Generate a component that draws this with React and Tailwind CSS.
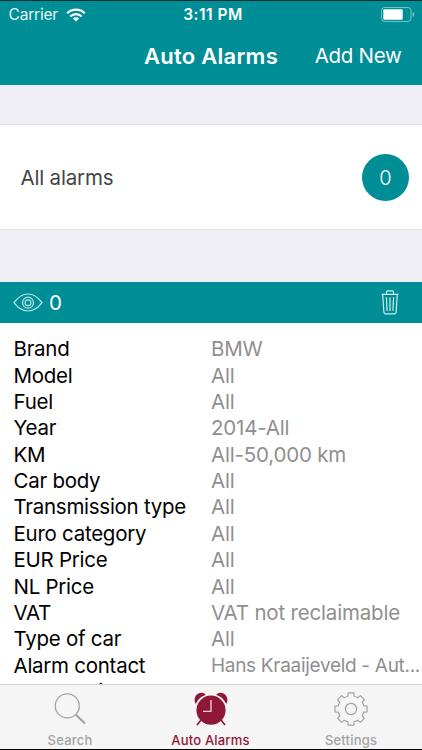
import { clsx } from "clsx";

const DETAILS = [
  { label: "Brand", value: "BMW" },
  { label: "Model", value: "All" },
  { label: "Fuel", value: "All" },
  { label: "Year", value: "2014-All" },
  { label: "KM", value: "All-50,000 km" },
  { label: "Car body", value: "All" },
  { label: "Transmission type", value: "All" },
  { label: "Euro category", value: "All" },
  { label: "EUR Price", value: "All" },
  { label: "NL Price", value: "All" },
  { label: "VAT", value: "VAT not reclaimable" },
  { label: "Type of car", value: "All" },
  { label: "Alarm contact", value: "Hans Kraaijeveld - Aut...", small: true },
  { label: "Announcing", value: "No" },
];

const TABS = [
  { label: "Search", icon: SearchIcon, width: "w-[140px]" },
  { label: "Auto Alarms", icon: AlarmIcon, width: "w-[141px]", active: true },
  { label: "Settings", icon: GearIcon, width: "w-[140px]" },
];

function WifiIcon() {
  return (
    <svg width="20" height="14" viewBox="0 0 20 14" fill="none" stroke="white" strokeWidth="2.3">
      <path d="M1.2 5.2a12.6 12.6 0 0 1 17.6 0" />
      <path d="M4.3 8.5a8.2 8.2 0 0 1 11.4 0" />
      <path d="M10 13.6 6.8 10.5a4.6 4.6 0 0 1 6.4 0z" fill="white" stroke="none" />
    </svg>
  );
}

function BatteryIcon() {
  return (
    <svg width="34" height="15" viewBox="0 0 34 15">
      <rect x="0.5" y="0.5" width="29.5" height="14" rx="3" fill="none" stroke="white" strokeOpacity="0.45" />
      <rect x="2.3" y="2.3" width="19.4" height="10.4" rx="1" fill="white" />
      <path d="M31.5 5v5c1.2-.4 1.8-1.3 1.8-2.5S32.7 5.4 31.5 5z" fill="white" fillOpacity="0.45" />
    </svg>
  );
}

function EyeIcon() {
  return (
    <svg width="30" height="20" viewBox="0 0 30 20" fill="none" stroke="#b9e6e9" strokeWidth="1.2">
      <path d="M1 9.7C5 4.2 9.5 1 15 1s10 3.2 14 8.7c-4 5.5-8.5 8.3-14 8.3S5 15.2 1 9.7z" />
      <circle cx="15" cy="9.7" r="5.5" />
      <circle cx="15" cy="9.7" r="2.9" />
    </svg>
  );
}

function TrashIcon() {
  return (
    <svg width="18" height="25" viewBox="0 0 18 25" fill="none" stroke="#c9edef" strokeWidth="1.2">
      <path d="M0.5 4.3h17M5.5 4V1.8c0-.6.4-1 1-1h5c.6 0 1 .4 1 1V4" />
      <path d="m1.7 4.5 1.2 17.8c.1 1 .6 1.5 1.5 1.5h9.2c.9 0 1.4-.5 1.5-1.5l1.2-17.8" />
      <path d="m5.4 7.3.7 13.6M9 7.3v13.6M12.6 7.3l-.7 13.6" />
    </svg>
  );
}

function SearchIcon() {
  return (
    <svg width="34" height="34" viewBox="0 0 34 34" fill="none" stroke="#a3a3a3">
      <circle cx="14.3" cy="13.9" r="12" strokeWidth="1.3" />
      <path d="m22.8 22.8 9.2 8.7" strokeWidth="2.2" />
    </svg>
  );
}

function AlarmIcon() {
  return (
    <svg width="34" height="34" viewBox="0 0 34 34">
      <g fill="#8f1838">
        <circle cx="17" cy="18.2" r="14.6" />
        <path d="M1.2 11.2C-1 5 3.2.2 8.8.9c1.5.2 2.3.9 2.8 2.1C7.5 4.4 4 7.2 2.2 11.2c-.2.4-.8.4-1 0z" />
        <path d="M32.8 11.2C35 5 30.8.2 25.2.9c-1.5.2-2.3.9-2.8 2.1 4.1 1.4 7.6 4.2 9.4 8.2.2.4.8.4 1 0z" />
      </g>
      <path d="m7 28-4 5M27 28l4 5" stroke="#8f1838" strokeWidth="1.7" />
      <path d="M17 8v11.3H9" fill="none" stroke="#efd9df" strokeWidth="1.3" />
    </svg>
  );
}

// Eight square teeth cut around one ring; each tooth is a 45° step.
const GEAR_PATH = (() => {
  const point = (radius, deg) => {
    const rad = (deg * Math.PI) / 180;
    return `${(17 + radius * Math.cos(rad)).toFixed(2)} ${(17 + radius * Math.sin(rad)).toFixed(2)}`;
  };
  let path = "";
  for (let i = 0; i < 8; i += 1) {
    const a = i * 45;
    path += `${i === 0 ? "M" : "L"}${point(13.1, a - 14)}L${point(16.3, a - 10)}L${point(16.3, a + 10)}L${point(13.1, a + 14)}`;
    path += `A13.1 13.1 0 0 1 ${point(13.1, a + 31)}`;
  }
  return `${path}Z`;
})();

function GearIcon() {
  return (
    <svg width="34" height="34" viewBox="0 0 34 34" fill="none" stroke="#a3a3a3" strokeWidth="1.2">
      <path d={GEAR_PATH} strokeLinejoin="round" />
      <circle cx="17" cy="17" r="5.6" />
    </svg>
  );
}

function StatusBar() {
  return (
    <div className="grid h-[27px] grid-cols-3 items-center text-[15.5px] leading-none">
      <div className="flex items-center gap-2 pl-[8.5px]">
        <span className="tracking-[-0.012em] text-white/90">Carrier</span>
        <WifiIcon />
      </div>
      <span className="pl-[4px] text-center font-semibold tracking-[0.03em]">3:11 PM</span>
      <div className="flex justify-end pr-[7px]">
        <BatteryIcon />
      </div>
    </div>
  );
}

function NavBar() {
  return (
    <div className="grid h-[56px] grid-cols-[1fr_auto_1fr] items-center leading-none">
      <span />
      <h1 className="text-[22px] font-semibold tracking-[0.012em]">Auto Alarms</h1>
      <button type="button" className="justify-self-end pr-[20.5px] text-[20.5px] tracking-[-0.014em]">
        Add New
      </button>
    </div>
  );
}

function TabBar() {
  return (
    <nav className="flex h-[66px] shrink-0 border-t border-b border-t-[#cfcfcf] border-b-black bg-[#f5f5f5]">
      {TABS.map(({ label, icon: Icon, width, active }) => (
        <button
          key={label}
          type="button"
          className={clsx(
            "flex flex-col items-center pt-[7px] text-[13px] leading-none font-medium tracking-[0.015em]",
            width,
            active ? "text-[#8f1838]" : "text-[#a3a3a3]",
          )}
        >
          <Icon />
          <span className="mt-[8px]">{label}</span>
        </button>
      ))}
    </nav>
  );
}

export default function App() {
  return (
    <div className="flex h-[750px] w-[422px] flex-col overflow-hidden bg-white font-['Inter','Liberation_Sans',sans-serif]">
      <header className="h-[85px] shrink-0 border-t border-[#0b2b2d] bg-[#008e96] text-white">
        <StatusBar />
        <NavBar />
      </header>

      <main className="flex min-h-0 flex-1 flex-col overflow-hidden">
        <div className="h-[39px] shrink-0 bg-[#efeef4]" />
        <section className="flex h-[106px] shrink-0 items-center justify-between border-y border-[#e4e4e6] pr-[13px] pl-[20.5px]">
          <span className="pt-[2px] text-[20.5px] tracking-[-0.009em] text-[#444]">All alarms</span>
          <span className="flex size-[47px] items-center justify-center rounded-full bg-[#008e96] pt-px text-[20px] font-light text-white">
            0
          </span>
        </section>
        <div className="h-[52px] shrink-0 bg-[#efeef4]" />

        <section>
          <div className="flex h-[41px] items-center justify-between bg-[#008e96] pr-[23px] pl-[13px] text-white">
            <div className="flex items-center gap-[6px]">
              <EyeIcon />
              <span className="pt-px text-[20.5px] leading-none">0</span>
            </div>
            <button type="button">
              <TrashIcon />
            </button>
          </div>
          <dl className="pt-[13.3px] text-[20.5px] leading-[26.37px]">
            {DETAILS.map(({ label, value, small }) => (
              <div key={label} className="flex h-[26.37px] pl-[13.5px] whitespace-nowrap">
                <dt className="w-[197.5px] shrink-0 tracking-[-0.013em] text-black">{label}</dt>
                <dd
                  className={clsx(
                    "text-[#8f8f8f]",
                    small ? "text-[19px] tracking-[-0.016em]" : "tracking-[-0.009em]",
                  )}
                >
                  {value}
                </dd>
              </div>
            ))}
          </dl>
        </section>
      </main>

      <TabBar />
    </div>
  );
}
